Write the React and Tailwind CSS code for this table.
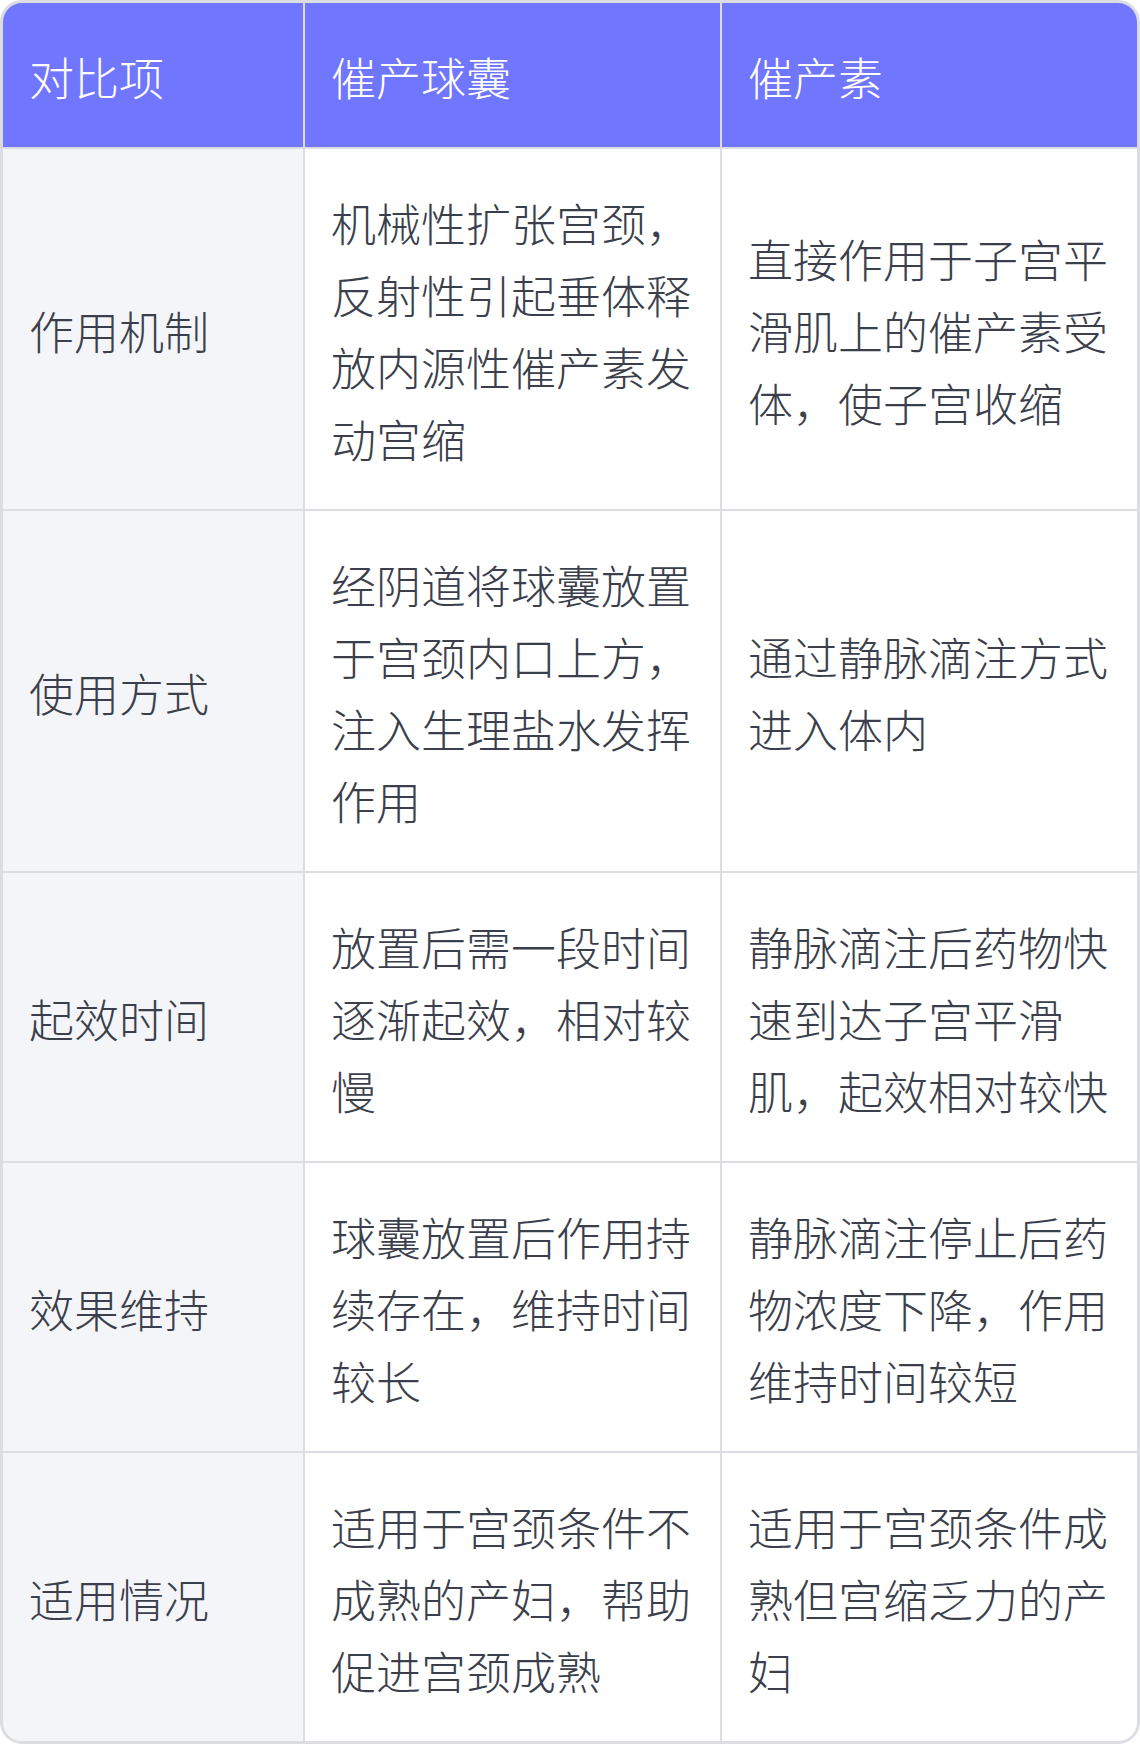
const rows = [
  {
    item: "作用机制",
    balloon: "机械性扩张宫颈，反射性引起垂体释放内源性催产素发动宫缩",
    oxytocin: "直接作用于子宫平滑肌上的催产素受体，使子宫收缩",
  },
  {
    item: "使用方式",
    balloon: "经阴道将球囊放置于宫颈内口上方，注入生理盐水发挥作用",
    oxytocin: "通过静脉滴注方式进入体内",
  },
  {
    item: "起效时间",
    balloon: "放置后需一段时间逐渐起效，相对较慢",
    oxytocin: "静脉滴注后药物快速到达子宫平滑肌，起效相对较快",
  },
  {
    item: "效果维持",
    balloon: "球囊放置后作用持续存在，维持时间较长",
    oxytocin: "静脉滴注停止后药物浓度下降，作用维持时间较短",
  },
  {
    item: "适用情况",
    balloon: "适用于宫颈条件不成熟的产妇，帮助促进宫颈成熟",
    oxytocin: "适用于宫颈条件成熟但宫缩乏力的产妇",
  },
];

export default function App() {
  return (
    <div
      className="w-[1140px] bg-white"
      style={{ fontFamily: '"Noto Sans CJK SC", "Noto Sans", sans-serif' }}
    >
      <div className="border-[3px] border-[#dcdde2] rounded-[22px] overflow-hidden">
        <div className="grid grid-cols-[300px_1fr_1fr] gap-[2px] bg-[#dcdde2] text-[45px] leading-[72px] font-light">
          {/* HEADER */}
          <div className="bg-[#7076fe] text-white pl-[26px] pr-[26px] pt-[38px] pb-[34px]">对比项</div>
          <div className="bg-[#7076fe] text-white pl-[26px] pr-[26px] pt-[38px] pb-[34px]">催产球囊</div>
          <div className="bg-[#7076fe] text-white pl-[26px] pr-[26px] pt-[38px] pb-[34px]">催产素</div>

          {/* BODY */}
          {rows.map((r) => (
            <div key={r.item} className="contents">
              <div className="bg-[#f4f5f9] text-[#3b3f4c] pl-[26px] pr-[26px] pt-[38px] pb-[34px] flex items-center">
                {r.item}
              </div>
              <div className="bg-white text-[#3b3f4c] pl-[26px] pr-[26px] pt-[38px] pb-[34px] flex items-center">
                <p>{r.balloon}</p>
              </div>
              <div className="bg-white text-[#3b3f4c] pl-[26px] pr-[26px] pt-[38px] pb-[34px] flex items-center">
                <p>{r.oxytocin}</p>
              </div>
            </div>
          ))}
        </div>
      </div>
    </div>
  );
}
